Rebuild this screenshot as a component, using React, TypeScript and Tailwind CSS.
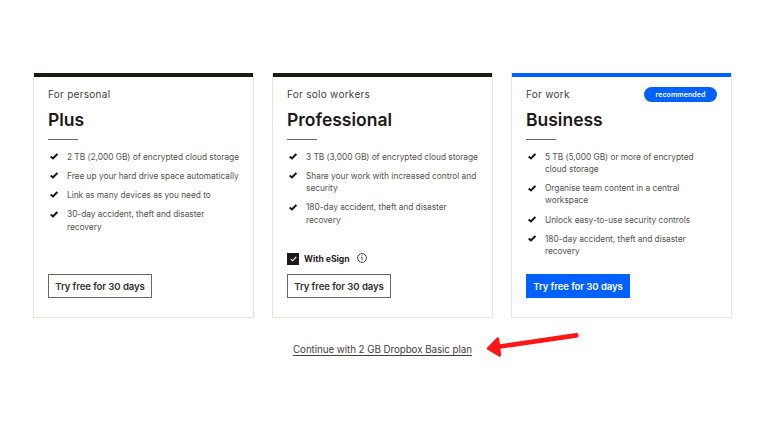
import React from "react";

const CheckMark = () => (
  <svg viewBox="0 0 8 7" className="mt-[2.5px] h-[7px] w-[8px] shrink-0 text-[#151313]" fill="none" stroke="currentColor" strokeWidth="2">
    <path d="M0.7 3.4 L3 5.4 L7.4 0.9" />
  </svg>
);

type PlanProps = {
  audience: string;
  name: string;
  features: string[][];
  primary?: boolean;
  esign?: boolean;
};

function Plan({ audience, name, features, primary, esign }: PlanProps) {
  return (
    <section
      className={`flex h-[245px] w-[221px] flex-col border border-[#e6e5e1] border-t-0 px-[14px] ${
        primary ? "shadow-[inset_0_4px_0_#0061fe]" : "shadow-[inset_0_4px_0_#1e1919]"
      }`}
    >
      <header className="mt-[12px] flex h-[18px] items-center justify-between">
        <span className="text-[10px] tracking-[0.28px] text-[#45403e]">{audience}</span>
        {primary && (
          <span className="flex h-[15px] w-[73px] items-center justify-center rounded-full bg-[#0061fe] pt-[2px] text-[7px] font-semibold tracking-[0.1px] text-white">
            recommended
          </span>
        )}
      </header>
      <h2 className="mt-[6px] text-[17.5px] leading-[22px] font-semibold text-[#1e1919]">{name}</h2>
      <div className="mt-[8px] h-px w-[30px] shrink-0 bg-[#6a6664]" />
      <ul className="mt-[10.5px] flex flex-col gap-[6.9px]">
        {features.map((lines) => (
          <li key={lines[0]} className="flex gap-[9px] pl-[2px]">
            <CheckMark />
            <span className="text-[8.4px] leading-[12.35px] tracking-[-0.045px] whitespace-nowrap text-[#575351]">
              {lines.map((line) => (
                <span key={line} className="block">{line}</span>
              ))}
            </span>
          </li>
        ))}
      </ul>
      <div className="mt-auto mb-[19px]">
        {esign && (
          <div className="mb-[9px] flex h-[12px] items-center">
            <span className="flex size-[12px] items-center justify-center bg-[#1e1919]">
              <svg viewBox="0 0 8 7" className="h-[6px] w-[7px]" fill="none" stroke="white" strokeWidth="1.3">
                <path d="M0.8 3.6 L3 5.6 L7.2 1.1" />
              </svg>
            </span>
            <span className="ml-[5px] pt-px text-[8.6px] font-bold whitespace-nowrap text-[#272220]">With eSign</span>
            <svg viewBox="0 0 10 10" className="-mt-[2px] ml-[7px] size-[10px]" fill="none" stroke="#3a3634">
              <circle cx="5" cy="5" r="4.4" strokeWidth="0.9" />
              <path d="M4.2 4.5 H5.1 V7.3 M5 2.5 V3.4" strokeWidth="0.9" />
            </svg>
          </div>
        )}
        <button
          className={`flex h-[24px] w-[104px] items-center justify-center border pt-[3px] text-[9.6px] font-semibold tracking-[-0.1px] whitespace-nowrap ${
            primary ? "border-[#0061fe] bg-[#0061fe] text-white" : "border-[#6a6664] bg-white text-[#35302e]"
          }`}
        >
          Try free for 30 days
        </button>
      </div>
    </section>
  );
}

export default function App() {
  return (
    <main className="h-[432px] w-[768px] overflow-hidden bg-white pt-[73px] font-[Inter,sans-serif]">
      <div className="ml-[33px] flex gap-[18px]">
        <Plan
          audience="For personal"
          name="Plus"
          features={[
            ["2 TB (2,000 GB) of encrypted cloud storage"],
            ["Free up your hard drive space automatically"],
            ["Link as many devices as you need to"],
            ["30-day accident, theft and disaster", "recovery"],
          ]}
        />
        <Plan
          audience="For solo workers"
          name="Professional"
          esign
          features={[
            ["3 TB (3,000 GB) of encrypted cloud storage"],
            ["Share your work with increased control and", "security"],
            ["180-day accident, theft and disaster", "recovery"],
          ]}
        />
        <Plan
          audience="For work"
          name="Business"
          primary
          features={[
            ["5 TB (5,000 GB) or more of encrypted", "cloud storage"],
            ["Organise team content in a central", "workspace"],
            ["Unlock easy-to-use security controls"],
            ["180-day accident, theft and disaster", "recovery"],
          ]}
        />
      </div>
      <div className="mt-[12px] ml-[293px] flex h-[38px] items-center">
        <a className="w-[180px] pt-[2px] text-[9.8px] tracking-[-0.07px] whitespace-nowrap text-[#45403e] underline underline-offset-[1.5px]">
          Continue with 2 GB Dropbox Basic plan
        </a>
        <svg viewBox="0 0 94 24" className="mb-[14px] ml-[13px] h-[24px] w-[94px] overflow-visible" fill="none" stroke="#ff1616">
          <path d="M14 16.5 L90.3 5.4" strokeWidth="4.6" strokeLinecap="round" />
          <path d="M2.3 18.5 L11.8 8.8 L13.7 25.2 Z" fill="#ff1616" strokeWidth="3" strokeLinejoin="round" />
        </svg>
      </div>
    </main>
  );
}
